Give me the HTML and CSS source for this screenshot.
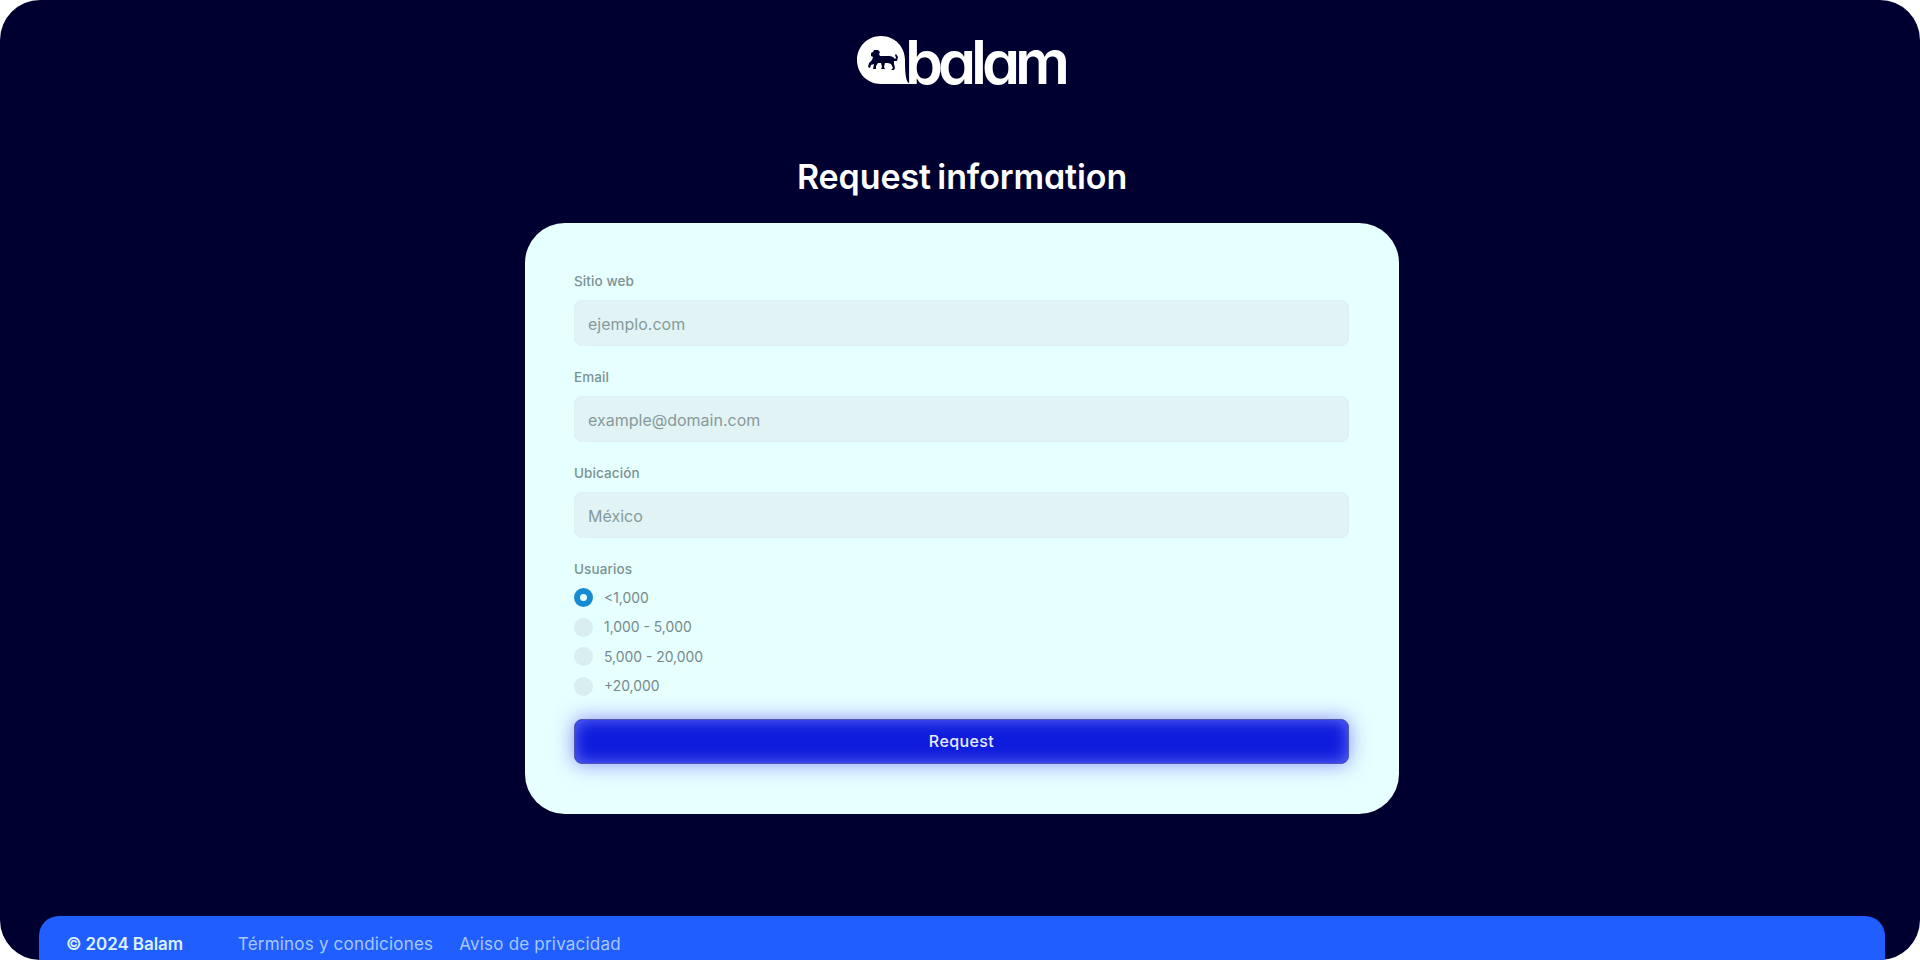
FILE: index.html
```html
<!DOCTYPE html>
<html lang="es">
<head>
    <meta charset="UTF-8">
    <meta name="viewport" content="width=device-width, initial-scale=1.0">
    <title>Balam</title>
    <link rel="stylesheet" href="styles.css">
</head>
<body>
    <div class="page">
        <header class="header">
            <svg class="logo" viewBox="0 0 212 52" role="img">
                <path fill="#fff" d="M25 1C11 1 1 12 1 25s10 24 24 24h29c-4-2-5-8-5-24C49 12 39 1 25 1z"/>
                <path fill="#000030" d="M15 18l2-1 1-2h4l2 2-1 2 1 2h10l3 1 2 2 1-1-1-3 1-1 2 3-1 4-3 0 0 3 1 4-1 2h-3l2-2-2-4-3-1-3 0-1 4 1 2h-4l1-2-1-4-3 0-2 3 0 3h-3l1-5-3 1-1 3-2-1 1-4 3-3 1-3-2-1z"/>
                <text class="logo-text" x="49" y="49" textLength="160" lengthAdjust="spacingAndGlyphs">balam</text>
            </svg>
        </header>
        <main class="main">
            <h1 class="title">Request information</h1>
            <form class="card">
                <div class="field">
                    <label class="label" for="web">Sitio web</label>
                    <input class="input" id="web" type="text" placeholder="ejemplo.com">
                </div>
                <div class="field">
                    <label class="label" for="email">Email</label>
                    <input class="input" id="email" type="email" placeholder="example@domain.com">
                </div>
                <div class="field">
                    <label class="label" for="place">Ubicación</label>
                    <input class="input" id="place" type="text" placeholder="México">
                </div>
                <div class="users">
                    <span class="label">Usuarios</span>
                    <label class="option"><input class="radio" type="radio" name="users" checked>&lt;1,000</label>
                    <label class="option"><input class="radio" type="radio" name="users">1,000 - 5,000</label>
                    <label class="option"><input class="radio" type="radio" name="users">5,000 - 20,000</label>
                    <label class="option"><input class="radio" type="radio" name="users">+20,000</label>
                </div>
                <button class="btn" type="button">Request</button>
            </form>
        </main>
        <footer class="footer">
            <span class="copy">© 2024 Balam</span>
            <a class="link" href="#">Términos y condiciones</a>
            <a class="link" href="#">Aviso de privacidad</a>
        </footer>
    </div>
</body>
</html>
```
FILE: styles.css
```css
*{
    margin: 0;
    padding: 0;
    box-sizing: border-box;
}
body{
    background: #fff;
    font-family: Inter, "Liberation Sans", sans-serif;
}
.page{
    height: 960px;
    overflow: hidden;
    display: flex;
    flex-direction: column;
    background: #000030;
    border-radius: 40px;
}
.header{
    display: flex;
    justify-content: center;
    padding-top: 35px;
    padding-left: 4px;
    height: 136px;
}
.logo{
    width: 212px;
    height: 52px;
    overflow: visible;
}
.logo-text{
    font: 600 60px Inter, sans-serif;
    font-feature-settings: "cv11";
    letter-spacing: -5px;
    fill: #fff;
}
.main{
    display: flex;
    flex-direction: column;
    align-items: center;
    height: 780px;
    padding-left: 4px;
}
.title{
    height: 87px;
    padding-top: 17px;
    font-size: 34px;
    line-height: 48px;
    font-weight: 600;
    letter-spacing: -0.1px;
    word-spacing: -2px;
    font-feature-settings: "cv11";
    color: #fff;
}
.card{
    width: 874px;
    height: 591px;
    padding: 49px;
    border-radius: 40px;
    background: #e6ffff;
}
.field{
    height: 96px;
}
.label{
    display: block;
    height: 28px;
    font-size: 13.5px;
    line-height: 18px;
    font-weight: 500;
    letter-spacing: .1px;
    color: #7c9292;
}
.input{
    display: block;
    width: 775px;
    height: 46px;
    padding: 1px 13px 0;
    border: 1px solid #dceff1;
    border-radius: 8px;
    background: #e1f3f5;
    font: 16px Inter, sans-serif;
}
.input::placeholder{
    color: #879a9b;
}
.users{
    height: 158.5px;
}
.users .label{
    height: 23px;
}
.option{
    display: flex;
    align-items: center;
    gap: 11px;
    height: 29.5px;
    font-size: 13.9px;
    color: #768989;
}
.radio{
    appearance: none;
    width: 19px;
    height: 19px;
    border-radius: 50%;
    background: #d9eeee;
}
.radio:checked{
    border: 6px solid #168bd2;
    background: #e6ffff;
}
.btn{
    display: block;
    width: 775px;
    height: 45px;
    padding-bottom: 1px;
    border: 1px solid #4b56b8;
    border-radius: 8px;
    background: #0f1cdc;
    box-shadow: 0 0 20px rgba(70, 70, 255, .6), inset 0 0 16px rgba(130, 140, 255, .75);
    font: 500 16px Inter, sans-serif;
    letter-spacing: .4px;
    font-feature-settings: "cv11";
    color: #e6ecff;
}
.footer{
    display: flex;
    align-items: center;
    height: 44px;
    margin: 0 35px 0 39px;
    padding: 11px 27px 0;
    border-radius: 20px 20px 0 0;
    background: #205eff;
    font-size: 17px;
}
.copy{
    margin-right: 55px;
    font-weight: 600;
    letter-spacing: -.1px;
    color: #dff0ff;
}
.link{
    margin-right: 26px;
    text-decoration: none;
    letter-spacing: .2px;
    color: #a8c8ff;
}
```
